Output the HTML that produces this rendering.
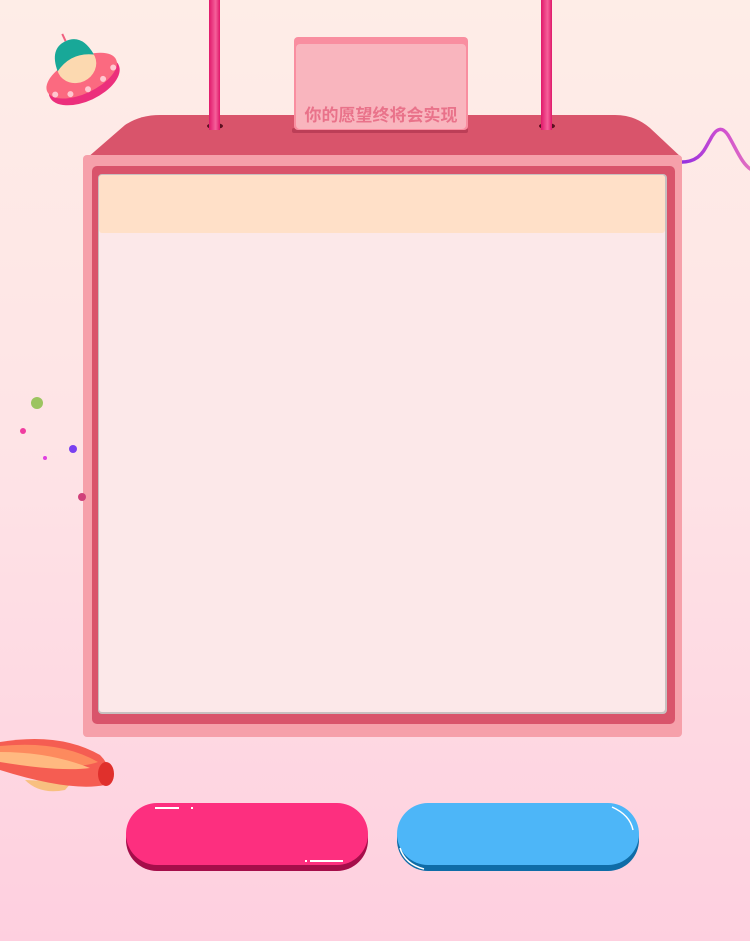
<!DOCTYPE html>
<html><head><meta charset="utf-8"><style>
html,body{margin:0;padding:0}
body{width:750px;height:941px;position:relative;overflow:hidden;background:linear-gradient(#feede7,#fee3e6 50%,#fecfdf);font-family:"Liberation Sans","Noto Sans CJK SC",sans-serif}
.a{position:absolute}
</style></head><body>
<svg class="a" style="left:0;top:0" width="750" height="941">
<defs>
<linearGradient id="pole" x1="0" x2="1"><stop offset="0" stop-color="#e0186a"/><stop offset=".6" stop-color="#f5609a"/><stop offset="1" stop-color="#e0186a"/></linearGradient>
<linearGradient id="wave" x1="0" x2="1"><stop offset="0" stop-color="#8a2be2"/><stop offset=".6" stop-color="#d04fd0"/><stop offset="1" stop-color="#e070c0"/></linearGradient>
</defs>
<!-- wave -->
<path d="M676 162 C700 164 704 150 710 140 C716 128 722 126 728 135 C736 148 742 165 752 170" fill="none" stroke="url(#wave)" stroke-width="3.5"/>
<!-- roof -->
<path d="M87 158 L125 125 Q140 115 160 115 L615 115 Q635 115 650 128 L682 158 Z" fill="#d9546b"/>
<ellipse cx="215" cy="126" rx="8" ry="3" fill="#5a1020"/>
<ellipse cx="547" cy="126" rx="8" ry="3" fill="#5a1020"/>
<rect x="209" y="0" width="11" height="130" fill="url(#pole)"/>
<rect x="541" y="0" width="11" height="130" fill="url(#pole)"/>
<!-- sign -->
<rect x="292" y="128" width="176" height="5" rx="2" fill="#a8304a" opacity=".6"/>
<rect x="294" y="37" width="174" height="93" rx="4" fill="#f98ea0"/>
<rect x="296" y="44" width="170" height="85" rx="4" fill="#f9b5be"/>
<!-- frame -->
<rect x="83" y="155" width="599" height="582" rx="4" fill="#f6a0aa"/>
<rect x="92" y="166" width="583" height="558" rx="5" fill="#d9546b"/>
<rect x="98" y="174" width="569" height="540" rx="4" fill="#c8c0c0"/>
<rect x="99" y="175" width="566" height="537" rx="3" fill="#fce8e9"/>
<rect x="99" y="175" width="566" height="58" rx="3" fill="#ffe0c8"/>
<!-- dots -->
<circle cx="37" cy="403" r="6" fill="#9cc460"/>
<circle cx="23" cy="431" r="3" fill="#f03ca0"/>
<circle cx="73" cy="449" r="4" fill="#7a40f0"/>
<circle cx="45" cy="458" r="2" fill="#e040e0"/>
<circle cx="82" cy="497" r="4" fill="#d0407a"/>
<!-- ufo -->
<g transform="rotate(-25 80 72)">
<ellipse cx="80" cy="82" rx="38" ry="20" fill="#ec2f7c"/>
<ellipse cx="80" cy="76" rx="38" ry="18" fill="#fb6a80"/>
<ellipse cx="80" cy="64" rx="20" ry="18" fill="#fcd9b0"/>
<path d="M60 62 Q62 38 80 38 Q98 38 100 62 Q80 50 60 62Z" fill="#18a898"/>
<line x1="80" y1="38" x2="80" y2="30" stroke="#f06080" stroke-width="2"/>
<circle cx="48" cy="82" r="3" fill="#ffc8d0"/><circle cx="62" cy="88" r="3" fill="#ffc8d0"/><circle cx="80" cy="91" r="3" fill="#ffc8d0"/><circle cx="98" cy="88" r="3" fill="#ffc8d0"/><circle cx="112" cy="82" r="3" fill="#ffc8d0"/>
</g>
<!-- blimp -->
<path d="M25 780 Q40 795 65 790 L72 782 Z" fill="#f8c080"/>
<path d="M0 742 Q60 732 100 755 Q115 770 105 785 Q70 792 0 770 Z" fill="#f55d52"/>
<path d="M0 746 Q60 740 98 762 Q70 772 0 760 Z" fill="#fd8a5e"/>
<path d="M0 752 Q50 752 90 768 Q60 772 0 762 Z" fill="#ffb980"/>
<ellipse cx="106" cy="774" rx="8" ry="12" fill="#e0302c"/>
<!-- buttons -->
<rect x="126" y="808" width="242" height="63" rx="31" fill="#a50e4a"/>
<rect x="126" y="803" width="242" height="62" rx="31" fill="#fd2f7f"/>
<rect x="155" y="807" width="24" height="2" fill="#fff"/><rect x="191" y="807" width="2" height="2" fill="#fff"/>
<rect x="310" y="860" width="33" height="2" fill="#fff"/><rect x="305" y="860" width="2" height="2" fill="#fff"/>
<rect x="397" y="808" width="242" height="63" rx="31" fill="#0f6ca7"/>
<rect x="397" y="803" width="242" height="62" rx="31" fill="#4db6f8"/>
<path d="M612 807 Q630 815 633 830" fill="none" stroke="#fff" stroke-width="1.5"/>
<path d="M400 848 Q405 864 424 869" fill="none" stroke="#fff" stroke-width="1.5"/>
</svg>
<div class="a" style="left:296px;top:101px;width:170px;text-align:center;font-size:17px;font-weight:bold;color:#e9728a;white-space:nowrap">你的愿望终将会实现</div>
</body></html>
